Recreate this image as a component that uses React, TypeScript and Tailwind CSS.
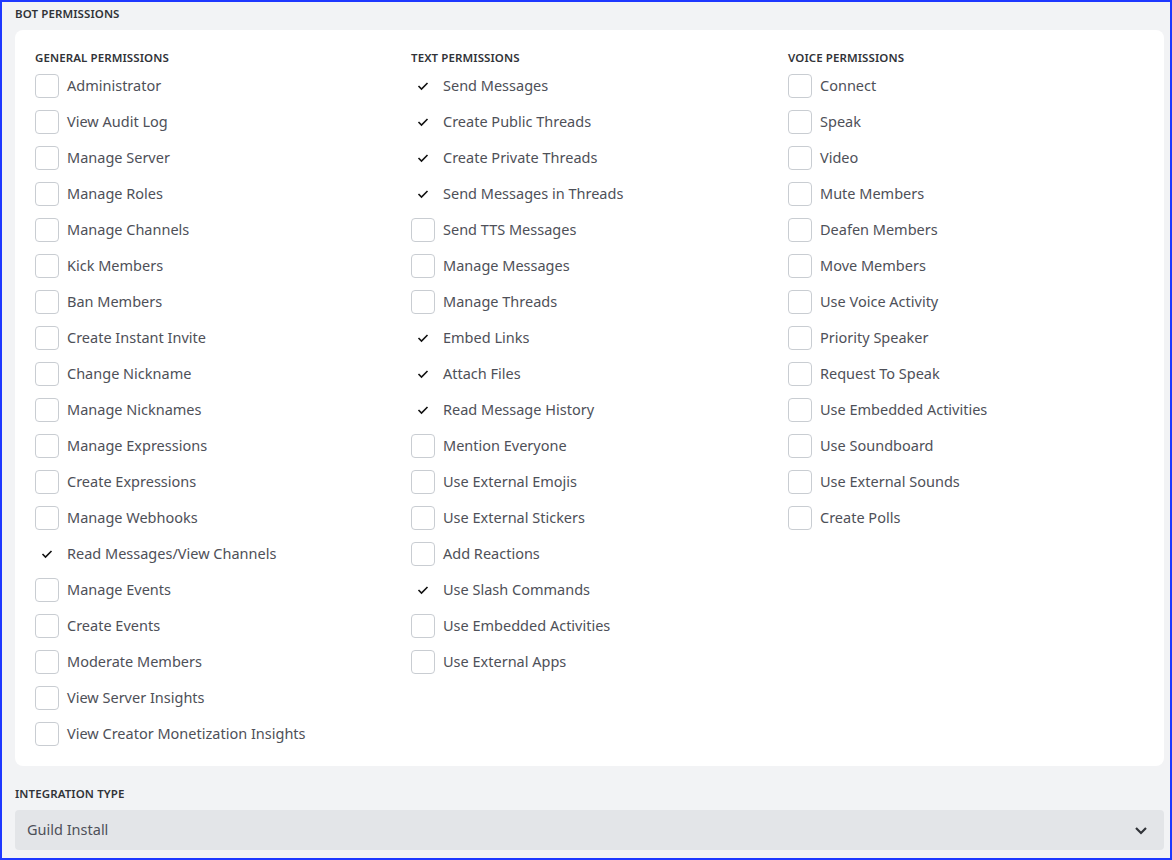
import React from "react"

type Perm = { label: string; on?: boolean }

const general: Perm[] = [
  { label: "Administrator" },
  { label: "View Audit Log" },
  { label: "Manage Server" },
  { label: "Manage Roles" },
  { label: "Manage Channels" },
  { label: "Kick Members" },
  { label: "Ban Members" },
  { label: "Create Instant Invite" },
  { label: "Change Nickname" },
  { label: "Manage Nicknames" },
  { label: "Manage Expressions" },
  { label: "Create Expressions" },
  { label: "Manage Webhooks" },
  { label: "Read Messages/View Channels", on: true },
  { label: "Manage Events" },
  { label: "Create Events" },
  { label: "Moderate Members" },
  { label: "View Server Insights" },
  { label: "View Creator Monetization Insights" },
]

const text: Perm[] = [
  { label: "Send Messages", on: true },
  { label: "Create Public Threads", on: true },
  { label: "Create Private Threads", on: true },
  { label: "Send Messages in Threads", on: true },
  { label: "Send TTS Messages" },
  { label: "Manage Messages" },
  { label: "Manage Threads" },
  { label: "Embed Links", on: true },
  { label: "Attach Files", on: true },
  { label: "Read Message History", on: true },
  { label: "Mention Everyone" },
  { label: "Use External Emojis" },
  { label: "Use External Stickers" },
  { label: "Add Reactions" },
  { label: "Use Slash Commands", on: true },
  { label: "Use Embedded Activities" },
  { label: "Use External Apps" },
]

const voice: Perm[] = [
  { label: "Connect" },
  { label: "Speak" },
  { label: "Video" },
  { label: "Mute Members" },
  { label: "Deafen Members" },
  { label: "Move Members" },
  { label: "Use Voice Activity" },
  { label: "Priority Speaker" },
  { label: "Request To Speak" },
  { label: "Use Embedded Activities" },
  { label: "Use Soundboard" },
  { label: "Use External Sounds" },
  { label: "Create Polls" },
]

function Row({ label, on }: Perm) {
  return (
    <div className="flex items-center h-9 gap-2">
      {on ? (
        <div className="w-6 h-6 flex items-center justify-center">
          <svg width="12" height="10" viewBox="0 0 12 10" fill="none">
            <path d="M1.5 5 L4.5 8 L10.5 2" stroke="#111" strokeWidth="1.6" />
          </svg>
        </div>
      ) : (
        <div className="w-6 h-6 rounded-[4px] border border-[#c9cdd2] bg-white" />
      )}
      <span className="text-[14.5px] leading-5 pb-[2px] text-[#4e5058]">{label}</span>
    </div>
  )
}

function Column({ title, items }: { title: string; items: Perm[] }) {
  return (
    <div>
      <div className="h-4 leading-4 text-[11.5px] font-semibold tracking-[0.1px] text-[#313338] mb-[2px]">{title}</div>
      {items.map((p, i) => (
        <Row key={i} {...p} />
      ))}
    </div>
  )
}

export default function App() {
  return (
    <div
      className="w-[1172px] h-[860px] border-2 border-[#1e38ff] bg-[#f2f3f5] pt-1 pl-[13px] pr-[6px]"
      style={{ fontFamily: '"Noto Sans", "Open Sans", sans-serif' }}
    >
      <div className="h-4 leading-4 text-[11.5px] font-semibold tracking-[0.1px] text-[#313338] mb-2">BOT PERMISSIONS</div>
      <div className="bg-white rounded-lg pt-5 pb-[14px] pl-5 grid grid-cols-[376px_377px_376px]">
        <Column title="GENERAL PERMISSIONS" items={general} />
        <Column title="TEXT PERMISSIONS" items={text} />
        <Column title="VOICE PERMISSIONS" items={voice} />
      </div>
      <div className="h-4 leading-4 text-[11.5px] font-semibold tracking-[0.1px] text-[#313338] mt-5 mb-2">INTEGRATION TYPE</div>
      <div className="h-10 rounded-[4px] bg-[#e3e5e8] flex items-center justify-between pl-3 pr-4">
        <span className="text-[14.5px] leading-5 pb-[2px] text-[#4e5058]">Guild Install</span>
        <svg width="14" height="10" viewBox="0 0 14 10" fill="none">
          <path d="M2 3 L7 8 L12 3" stroke="#313338" strokeWidth="2.2" />
        </svg>
      </div>
    </div>
  )
}
